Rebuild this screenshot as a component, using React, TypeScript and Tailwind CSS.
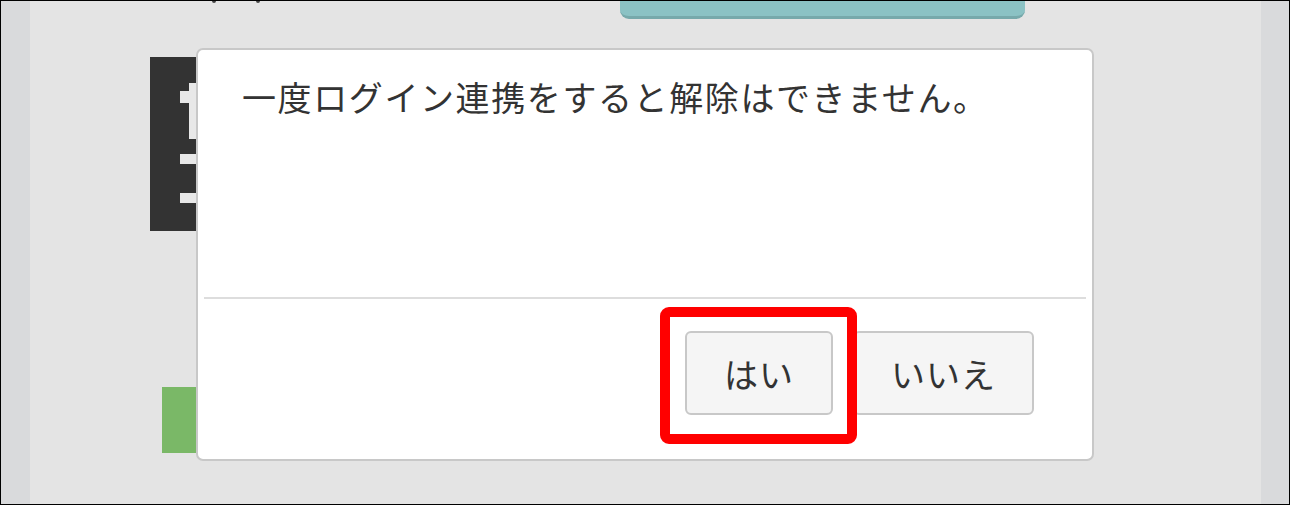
const jp = "font-['Noto_Sans_CJK_JP','Noto_Sans',sans-serif]";

function ConfirmDialog() {
  return (
    <div className="absolute left-[166px] top-[47px] w-[898px] h-[413px] bg-white border-2 border-[#c8c8c8] rounded-[7px] flex flex-col">
      {/* message */}
      <div className="h-[247px] pl-[44px] pt-[23px]">
        <p className={`${jp} text-[34px] leading-[48px] tracking-[1.6px] text-[#333]`}>
          一度ログイン連携をすると解除はできません。
        </p>
      </div>

      <div className="mx-[6px] h-[2px] bg-[#dddddd]" />

      {/* actions */}
      <div className="flex-1 flex justify-end items-start gap-[20px] pt-[32px] pr-[58px]">
        <button
          type="button"
          className={`${jp} w-[148px] h-[84px] bg-[#f5f5f5] border-2 border-[#c8c8c8] rounded-[6px] text-[34px] tracking-[1px] text-[#333]`}
        >
          はい
        </button>
        <button
          type="button"
          className={`${jp} w-[181px] h-[84px] bg-[#f5f5f5] border-2 border-[#c8c8c8] rounded-[6px] text-[34px] tracking-[1px] text-[#333]`}
        >
          いいえ
        </button>
      </div>

      {/* highlight around the confirm button */}
      <div className="absolute left-[462px] top-[257px] w-[197px] h-[137px] border-[10px] border-[#ff0000] rounded-[9px]" />
    </div>
  );
}

export default function App() {
  return (
    <div className="w-[1290px] h-[505px] border border-black bg-[#d9dadc] flex overflow-hidden">
      <div className="w-[29px] shrink-0" />

      <div className="relative flex-1 bg-[#e4e4e4]">
        {/* page behind the dialog */}
        <div className="flex">
          <div className="ml-[182px] mt-[-2px] flex gap-[40px]">
            <span className="w-[4px] h-[4px] rounded-full bg-[#444]" />
            <span className="w-[4px] h-[4px] rounded-full bg-[#444]" />
          </div>
          <div className="ml-[360px] w-[405px] h-[18px] bg-[#8bc2c4] rounded-b-[9px] border-b-[3px] border-[#77a9ab]" />
        </div>

        <div className="ml-[120px] mt-[38px] w-[47px] h-[174px] bg-[#333] flex flex-col items-end pt-[26px]">
          <div className="w-[8px] h-[8px] bg-[#e8e8e8]" />
          <div className="w-[17px] h-[12px] bg-[#e8e8e8]" />
          <div className="w-[8px] h-[36px] bg-[#e8e8e8]" />
          <div className="mt-[15px] w-[17px] h-[10px] bg-[#e8e8e8]" />
          <div className="mt-[29px] w-[17px] h-[10px] bg-[#e8e8e8]" />
        </div>

        <div className="ml-[132px] mt-[156px] w-[35px] h-[66px] bg-[#7ab867]" />

        <ConfirmDialog />
      </div>

      <div className="w-[28px] shrink-0" />
    </div>
  );
}
